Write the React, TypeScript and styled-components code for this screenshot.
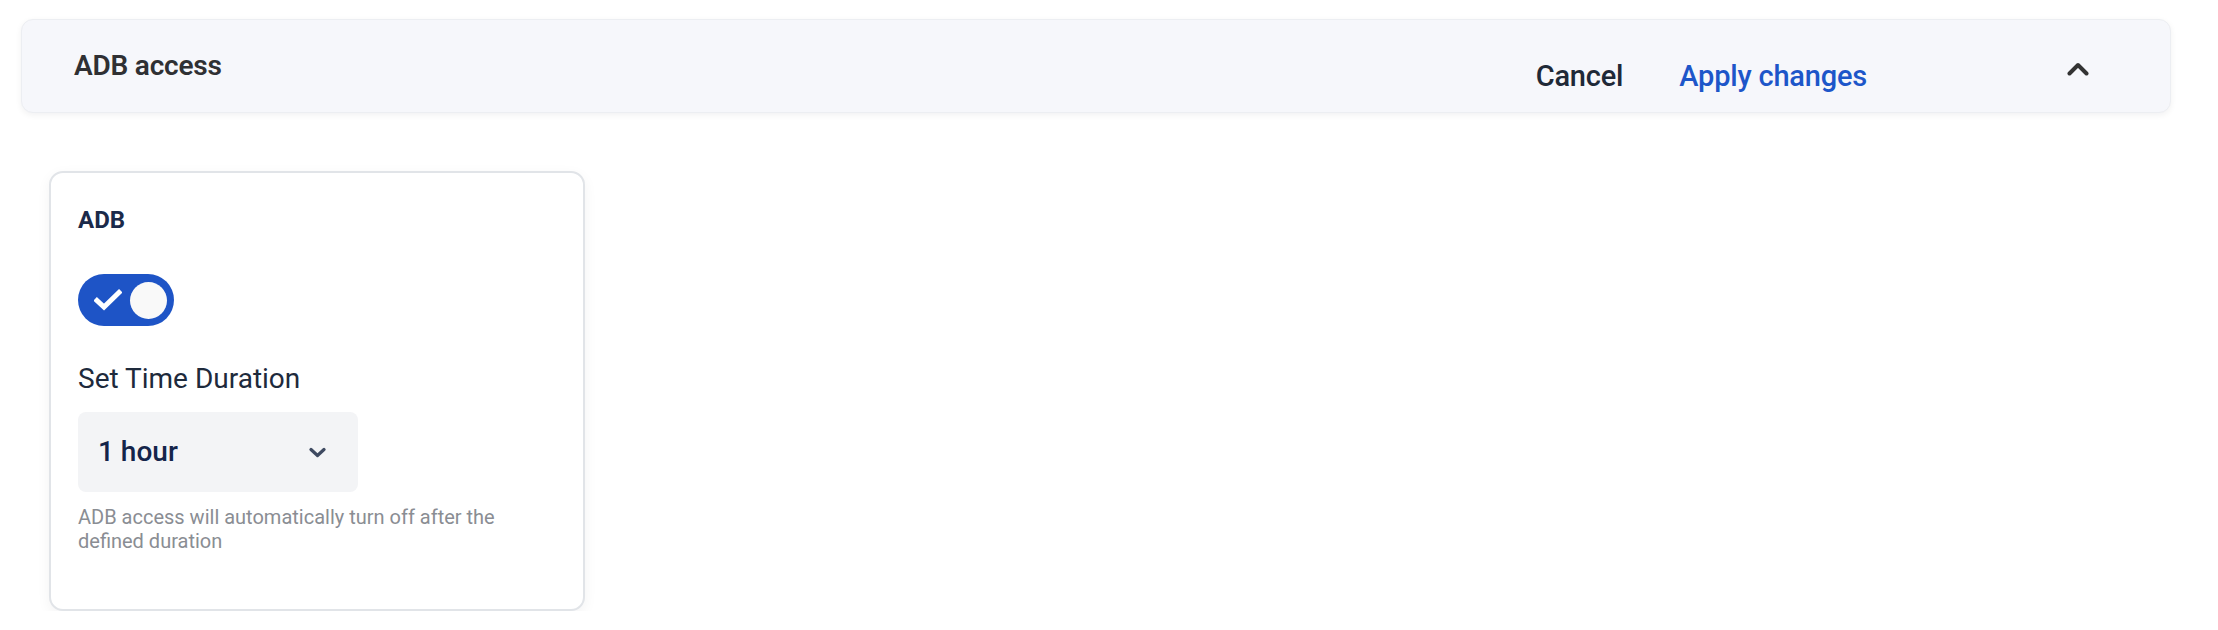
import styled, { createGlobalStyle } from "styled-components";

const GlobalStyle = createGlobalStyle`
  html, body {
    margin: 0;
    padding: 0;
    background: #ffffff;
    font-family: Roboto, "Noto Sans", "Liberation Sans", sans-serif;
  }
`;

const Page = styled.div`
  padding: 19px 47px 0 21px;
`;

const Header = styled.div`
  height: 94px;
  box-sizing: border-box;
  display: flex;
  align-items: center;
  padding: 0 0 0 52px;
  background: #f6f7fb;
  border: 1px solid #eceef2;
  border-radius: 12px;
  box-shadow: 0 2px 6px rgba(15, 23, 42, 0.06);
`;

const Title = styled.h2`
  margin: 0;
  font-size: 28px;
  line-height: 34px;
  font-weight: 600;
  color: #2f3033;
  letter-spacing: -0.2px;
`;

const Actions = styled.div`
  margin-left: auto;
  margin-top: 20px;
  display: flex;
  align-items: center;
  gap: 56px;
`;

const TextButton = styled.button<{ $primary?: boolean }>`
  border: 0;
  background: none;
  padding: 0;
  font-family: inherit;
  font-size: 29px;
  line-height: 34px;
  font-weight: 500;
  letter-spacing: -0.2px;
  color: ${(p) => (p.$primary ? "#1d56c9" : "#1f2937")};
  cursor: pointer;
`;

const CollapseButton = styled.button`
  border: 0;
  background: none;
  padding: 0;
  margin: 6px 81px 0 200px;
  width: 22px;
  height: 14px;
  display: grid;
  place-items: center;
  color: #333333;
  cursor: pointer;
`;

const Card = styled.div`
  margin: 58px 0 0 28px;
  width: 536px;
  height: 440px;
  box-sizing: border-box;
  padding: 32px 27px 0;
  border: 2px solid #e1e4e8;
  border-radius: 14px;
  background: #ffffff;
  box-shadow: 0 4px 14px rgba(15, 23, 42, 0.05);
  display: flex;
  flex-direction: column;
  align-items: flex-start;
`;

const CardLabel = styled.div`
  font-size: 24px;
  line-height: 30px;
  font-weight: 700;
  color: #1b2a4a;
`;

const Track = styled.button<{ $on: boolean }>`
  margin-top: 39px;
  width: 96px;
  height: 52px;
  border: 0;
  padding: 0 7px 0 16px;
  border-radius: 26px;
  background: ${(p) => (p.$on ? "#1e54c6" : "#c7ccd6")};
  display: flex;
  align-items: center;
  justify-content: space-between;
  cursor: pointer;
`;

const Knob = styled.span`
  width: 37px;
  height: 37px;
  border-radius: 50%;
  background: #f9f9f9;
`;

const FieldLabel = styled.div`
  margin-top: 36px;
  font-size: 28px;
  line-height: 34px;
  font-weight: 400;
  color: #1e2a3c;
`;

const Select = styled.div`
  margin-top: 16px;
  width: 280px;
  height: 80px;
  box-sizing: border-box;
  padding: 0 32px 0 20px;
  border-radius: 8px;
  background: #f3f4f6;
  display: flex;
  align-items: center;
  justify-content: space-between;
  cursor: pointer;
`;

const SelectValue = styled.span`
  font-size: 28px;
  line-height: 34px;
  font-weight: 500;
  color: #14244a;
`;

const Helper = styled.p`
  margin: 13px 0 0;
  max-width: 460px;
  font-size: 20px;
  line-height: 24px;
  color: #8a8d93;
`;

function ChevronUp() {
  return (
    <svg width="22" height="14" viewBox="0 0 22 14" fill="none">
      <path
        d="M2.5 11.5 11 3l8.5 8.5"
        stroke="currentColor"
        strokeWidth="4"
        strokeLinecap="round"
        strokeLinejoin="round"
      />
    </svg>
  );
}

function ChevronDown() {
  return (
    <svg width="17" height="11" viewBox="0 0 17 11" fill="none">
      <path
        d="M2 2.5 8.5 8.5 15 2.5"
        stroke="#3e4a61"
        strokeWidth="3.2"
        strokeLinecap="round"
        strokeLinejoin="round"
      />
    </svg>
  );
}

function CheckIcon() {
  return (
    <svg width="28" height="22" viewBox="0 0 28 22" fill="none">
      <path
        d="M3 11.5 10 18 25 3.5"
        stroke="#ffffff"
        strokeWidth="5"
        strokeLinecap="square"
        strokeLinejoin="miter"
      />
    </svg>
  );
}

export default function App() {
  return (
    <>
      <GlobalStyle />
      <Page>
        <Header>
          <Title>ADB access</Title>
          <Actions>
            <TextButton>Cancel</TextButton>
            <TextButton $primary>Apply changes</TextButton>
          </Actions>
          <CollapseButton aria-label="Collapse">
            <ChevronUp />
          </CollapseButton>
        </Header>

        <Card>
          <CardLabel>ADB</CardLabel>
          <Track $on role="switch" aria-checked>
            <CheckIcon />
            <Knob />
          </Track>
          <FieldLabel>Set Time Duration</FieldLabel>
          <Select>
            <SelectValue>1 hour</SelectValue>
            <ChevronDown />
          </Select>
          <Helper>
            ADB access will automatically turn off after the defined duration
          </Helper>
        </Card>
      </Page>
    </>
  );
}
